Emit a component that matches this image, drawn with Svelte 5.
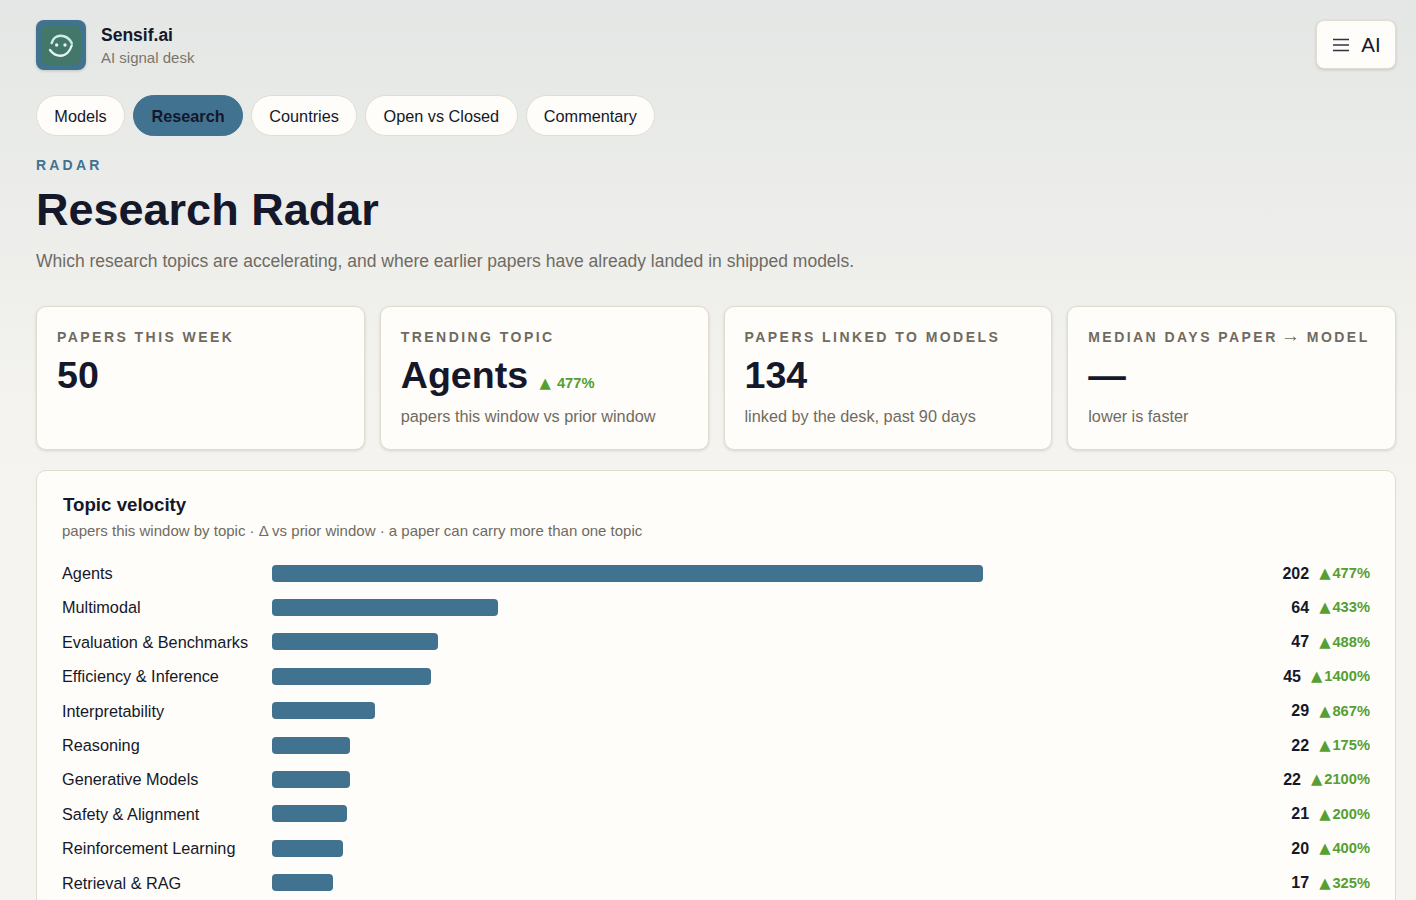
<script>
  const tabs = ['Models', 'Research', 'Countries', 'Open vs Closed', 'Commentary']
  const active = 'Research'

  const topics = [
    { name: 'Agents', count: 202, delta: 477 },
    { name: 'Multimodal', count: 64, delta: 433 },
    { name: 'Evaluation & Benchmarks', count: 47, delta: 488 },
    { name: 'Efficiency & Inference', count: 45, delta: 1400 },
    { name: 'Interpretability', count: 29, delta: 867 },
    { name: 'Reasoning', count: 22, delta: 175 },
    { name: 'Generative Models', count: 22, delta: 2100 },
    { name: 'Safety & Alignment', count: 21, delta: 200 },
    { name: 'Reinforcement Learning', count: 20, delta: 400 },
    { name: 'Retrieval & RAG', count: 17, delta: 325 }
  ]
  const max = topics[0].count
</script>

<div class="page">
  <header class="top">
    <div class="brand">
      <div class="logo">
        <svg viewBox="0 0 40 40" fill="none">
          <path d="M10.7 18C12 13 16 10.7 19.5 10.7C24 10.7 28.5 13.5 30.7 18" stroke="#cfeee3" stroke-width="2.6" stroke-linecap="round"/>
          <path d="M9 25C12 29 16 30.7 19.5 30.7C25 30.7 29 26 30.7 20.5" stroke="#e4f5ee" stroke-width="2.4" stroke-linecap="round"/>
          <circle cx="15.7" cy="20" r="1.7" fill="#e4f5ee"/>
          <circle cx="24" cy="20" r="1.7" fill="#e4f5ee"/>
        </svg>
      </div>
      <div>
        <div class="brand-name">Sensif.ai</div>
        <div class="brand-sub">AI signal desk</div>
      </div>
    </div>
    <button class="menu">
      <svg width="16" height="14" viewBox="0 0 16 14" fill="none">
        <path d="M0 1.5H16M0 7H16M0 12.5H16" stroke="#2f3340" stroke-width="1.5"/>
      </svg>
      <span>AI</span>
    </button>
  </header>

  <nav class="tabs">
    {#each tabs as tab}
      <button class="tab" class:active={tab === active}>{tab}</button>
    {/each}
  </nav>

  <div class="eyebrow">RADAR</div>
  <h1>Research Radar</h1>
  <p class="lede">Which research topics are accelerating, and where earlier papers have already landed in shipped models.</p>

  <section class="cards">
    <div class="card">
      <div class="card-label">Papers this week</div>
      <div class="card-value">50</div>
    </div>
    <div class="card">
      <div class="card-label">Trending topic</div>
      <div class="card-value">Agents <span class="card-delta"><span class="tri">▲</span> 477%</span></div>
      <div class="card-note">papers this window vs prior window</div>
    </div>
    <div class="card">
      <div class="card-label">Papers linked to models</div>
      <div class="card-value">134</div>
      <div class="card-note">linked by the desk, past 90 days</div>
    </div>
    <div class="card">
      <div class="card-label">Median days paper<span class="arrow">→</span> model</div>
      <div class="card-value">—</div>
      <div class="card-note">lower is faster</div>
    </div>
  </section>

  <section class="panel">
    <h2>Topic velocity</h2>
    <p class="panel-sub">papers this window by topic · Δ vs prior window · a paper can carry more than one topic</p>
    <div class="rows">
      {#each topics as t}
        <div class="row">
          <div class="row-name">{t.name}</div>
          <div class="track"><div class="bar" style="width: {1 + (t.count / max) * 710}px"></div></div>
          <div class="row-count">{t.count}</div>
          <div class="row-delta"><span class="tri">▲</span>{t.delta}%</div>
        </div>
      {/each}
    </div>
  </section>
</div>

<style>
  :global(body) {
    background: #f5f4f0;
    font-family: "Liberation Sans", Arial, sans-serif;
    color: #14182a;
  }

  .page {
    padding: 20px 20px 40px 36px;
    background: linear-gradient(180deg, #e4e7e5 0, #f4f3ef 420px, #f5f4f0 100%);
  }

  .top {
    display: flex;
    justify-content: space-between;
    align-items: flex-start;
  }

  .brand {
    display: flex;
    align-items: center;
    gap: 15px;
  }

  .logo {
    width: 50px;
    height: 50px;
    box-sizing: border-box;
    padding: 5px;
    border-radius: 8px;
    background: #41728f;
    box-shadow: 0 1px 3px rgba(40, 50, 50, 0.2);
    display: flex;
  }

  .logo svg {
    width: 40px;
    height: 40px;
    background: #437769;
    border-radius: 7px;
  }

  .brand-name {
    padding-top: 2px;
    font-size: 17.5px;
    font-weight: 700;
    line-height: 24px;
  }

  .brand-sub {
    font-size: 15px;
    line-height: 22px;
    color: #7a756b;
  }

  .menu {
    width: 80px;
    height: 49px;
    display: flex;
    align-items: center;
    justify-content: center;
    gap: 12px;
    background: #fffdf9;
    border: 1px solid #e2dcd0;
    border-radius: 8px;
    box-shadow: 0 1px 3px rgba(60, 50, 30, 0.18);
    font: 20.5px "Liberation Sans", Arial, sans-serif;
    color: #14182a;
    padding: 0 0 0 2px;
  }

  .tabs {
    display: flex;
    gap: 8px;
    margin-top: 25px;
  }

  .tab {
    height: 41px;
    padding: 1px 17.35px 0;
    border: 1px solid #e2dcd0;
    border-radius: 21px;
    background: #fffdf9;
    font: 16.25px "Liberation Sans", Arial, sans-serif;
    color: #14182a;
  }

  .tab.active {
    background: #41728f;
    border-color: #41728f;
    font-weight: 700;
  }

  .eyebrow {
    margin-top: 20px;
    font-size: 14px;
    font-weight: 700;
    line-height: 18px;
    letter-spacing: 3.2px;
    color: #41728f;
  }

  h1 {
    margin: 10px 0 0;
    font-size: 45px;
    line-height: 52px;
    font-weight: 700;
    color: #14182a;
  }

  .lede {
    margin: 12px 0 0;
    font-size: 17.5px;
    line-height: 26px;
    color: #6f6b62;
  }

  .cards {
    display: grid;
    grid-template-columns: repeat(4, 1fr);
    gap: 15px;
    margin-top: 32px;
  }

  .card {
    height: 144px;
    box-sizing: border-box;
    padding: 20px;
    background: #fffdf9;
    border: 1px solid #e2dcd0;
    border-radius: 10px;
    box-shadow: 0 1px 3px rgba(60, 50, 30, 0.16);
  }

  .card-label {
    font-size: 14px;
    font-weight: 700;
    line-height: 20px;
    letter-spacing: 2.45px;
    text-transform: uppercase;
    color: #6f6b62;
  }

  .arrow {
    margin-left: 3.35px;
    font-size: 19px;
    font-weight: 400;
    line-height: 0;
    letter-spacing: 0.45px;
  }

  .card-value {
    margin-top: 6px;
    font-size: 37.6px;
    line-height: 44px;
    font-weight: 700;
  }

  .card-delta {
    margin-left: 1px;
    font-size: 14.7px;
    line-height: 1;
    color: #559f33;
  }

  .tri {
    margin-right: 2px;
    font-family: "DejaVu Sans", sans-serif;
    font-weight: 400;
    line-height: 1;
  }

  .card-note {
    margin-top: 8px;
    font-size: 16.25px;
    line-height: 22px;
    color: #6f6b62;
  }

  .panel {
    margin-top: 20px;
    padding: 21px 25px 26px;
    background: #fffdf9;
    border: 1px solid #e2dcd0;
    border-radius: 10px;
  }

  h2 {
    margin: 0;
    padding-left: 1px;
    font-size: 18.7px;
    line-height: 26px;
    font-weight: 700;
  }

  .panel-sub {
    margin: 3px 0 0;
    font-size: 15px;
    line-height: 20px;
    color: #6f6b62;
  }

  .rows {
    margin-top: 14.9px;
  }

  .row {
    display: flex;
    align-items: center;
    height: 34.4px;
    font-size: 16.25px;
  }

  .row-name {
    width: 210px;
    flex: none;
    padding-top: 1px;
  }

  .track {
    flex: 1;
  }

  .bar {
    height: 17px;
    background: #41728f;
    border-radius: 4px;
  }

  .row-count {
    padding-top: 1px;
    font-size: 16px;
    font-weight: 700;
  }

  .row-delta {
    margin-left: 10px;
    font-size: 14.7px;
    font-weight: 700;
    color: #559f33;
  }
</style>
